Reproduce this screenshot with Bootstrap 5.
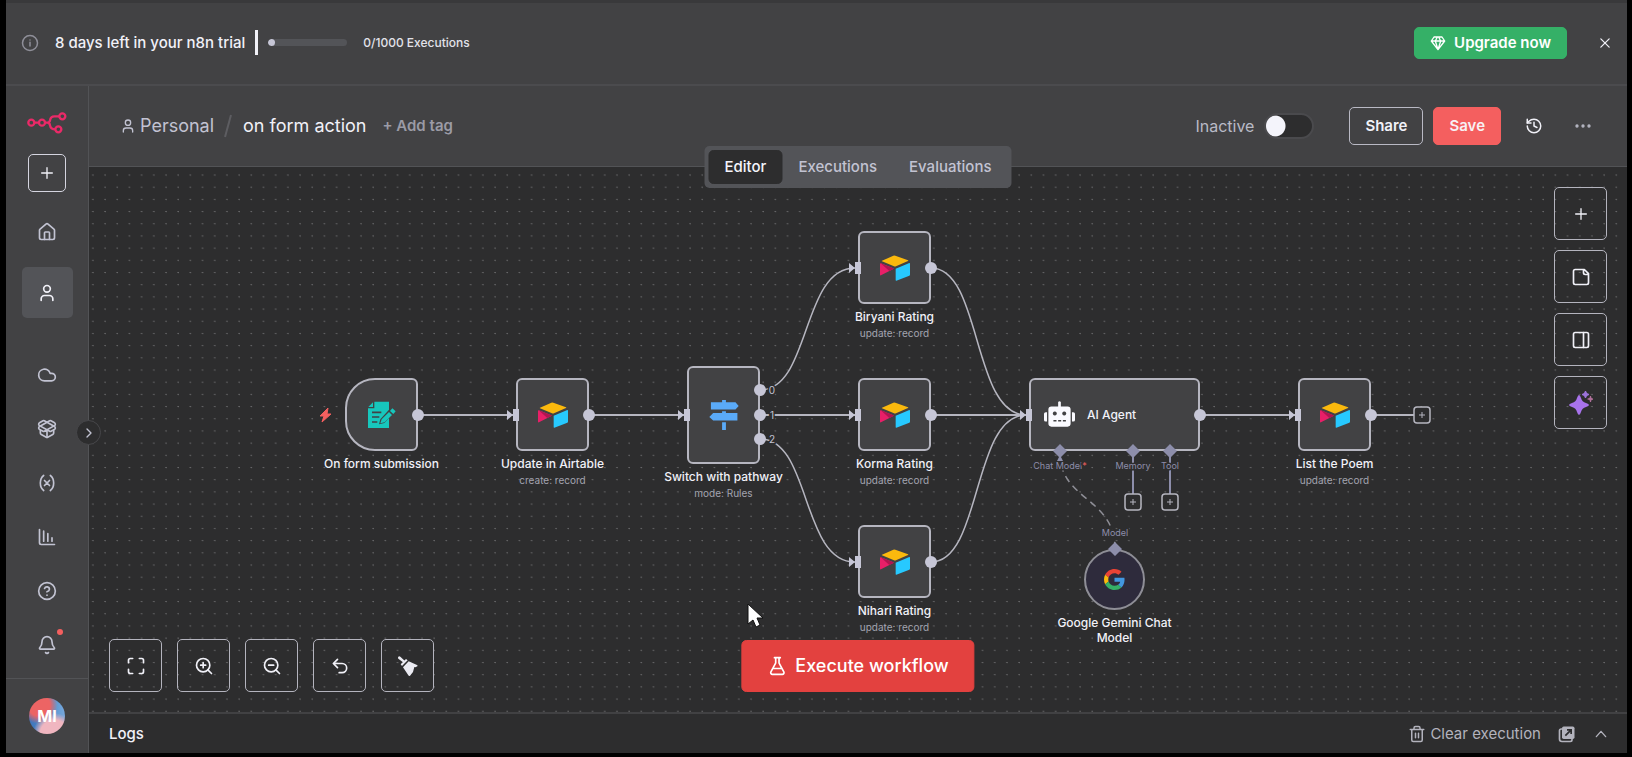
<!DOCTYPE html>
<html lang="en" data-bs-theme="dark">
<head>
<meta charset="utf-8">
<meta name="viewport" content="width=device-width, initial-scale=1">
<title>on form action - n8n</title>
<link href="https://cdn.jsdelivr.net/npm/bootstrap@5.3.0/dist/css/bootstrap.min.css" rel="stylesheet">
<style>
  :root {
    --panel: #424244; --canvas: #2d2d2e; --rule: #525356; --raised: #535458;
    --line: #b6b6c0; --port: #c6c6d6; --sub: #8d8eab; --soft: #c2c3d2; --bright: #f1f1f8;
  }
  body { background: #000; color: var(--bright); font-family: Inter, "Liberation Sans", sans-serif; font-size: 15px; line-height: 20px; }
  .shell { min-height: 100vh; padding: 0 5px 4px 6px; }
  .ico { width: 20px; height: 20px; fill: none; stroke: currentColor; stroke-width: 2; stroke-linecap: round; stroke-linejoin: round; flex: none; }
  .ico-16 { width: 16px; height: 16px; }
  .ico-18 { width: 18px; height: 18px; }
  .plain { background: none; border: 0; padding: 0; color: inherit; display: inline-flex; }
  a { color: inherit; text-decoration: none; }

  .trial { background: var(--panel); border-top: 3px solid #39393b; border-bottom: 2px solid #4b4b4e; height: 86px; padding: 0 12px 2px 15px; }
  .trial-note { font-weight: 500; }
  .trial-bar { width: 3px; height: 25px; background: var(--bright); margin: 0 10px; }
  .progress { --bs-progress-height: 7px; --bs-progress-bg: #535458; --bs-progress-bar-bg: #c6c6d6; width: 79px; border-radius: 4px; }
  .progress-bar { border-radius: 4px; }
  .usage { font-size: 12px; font-weight: 500; color: #e2e2ea; }
  .btn { --bs-btn-font-size: 15px; --bs-btn-font-weight: 600; line-height: 20px; border-radius: 5px; }
  .btn-upgrade { --bs-btn-color: #fff; --bs-btn-bg: #35b067; --bs-btn-border-color: #35b067; --bs-btn-padding-y: 5px; --bs-btn-padding-x: 15px; }

  .rail { width: 83px; background: var(--panel); border-right: 1px solid var(--rule); color: var(--soft); }
  .rail-top { padding-top: 22px; }
  .rail-link { width: 51px; height: 51px; border-radius: 5px; }
  .rail-link.active { background: var(--raised); color: var(--bright); }
  .rail-list { gap: 3px; }
  .btn-new { width: 38px; height: 38px; border: 1px solid #d5d5e0; border-radius: 5px; color: var(--bright); margin-bottom: 14px; }
  .rail-home { margin-bottom: 10px; }
  .rail-foot { border-top: 1px solid var(--rule); height: 75px; }
  .avatar { width: 36px; height: 36px; border-radius: 50%; color: #fff; font-size: 16px; font-weight: 700;
    background: radial-gradient(circle at 70% 100%, #f0b6c0 0 32%, transparent 48%), radial-gradient(circle at 28% 20%, #ec6464 0 28%, transparent 48%), linear-gradient(90deg, #3f73ba, #4c93d0 60%, #7aa8dc); }
  .dot { width: 6px; height: 6px; border-radius: 50%; background: #f45f5f; top: 10px; right: 10px; }
  .rail-toggle { width: 25px; height: 25px; border: 1px solid #47474a; border-radius: 50%; background: var(--canvas); color: var(--soft); top: 334px; right: -13px; z-index: 3; }

  .topbar { background: var(--panel); border-bottom: 1px solid var(--rule); height: 81px; padding: 0 36px 0 31px; }
  .crumb { font-size: 18px; color: var(--soft); }
  .crumb-now { font-size: 18px; }
  .add-tag { font-weight: 600; color: #9b9ba6; }
  .state { color: #b9bac6; }
  .state-label { font-size: 16px; }
  .run-state { gap: 10px; margin-right: 35px; }
  .form-switch .form-check-input { width: 50px; height: 26px; margin: 0; border: 2px solid #4a4a4d; background-color: var(--canvas); background-image: radial-gradient(circle at 9px 50%, #f4f4fb 10px, transparent 11px); background-size: auto; background-position: left center; }
  .btn-share { --bs-btn-color: #f1f1f8; --bs-btn-border-color: #b9b9c4; --bs-btn-padding-y: 8px; --bs-btn-padding-x: 15px; margin-right: 10px; }
  .btn-save { --bs-btn-color: #f8f0f4; --bs-btn-bg: #f45f5f; --bs-btn-border-color: #f45f5f; --bs-btn-padding-y: 8px; --bs-btn-padding-x: 15px; }
  .views { top: 60px; padding: 4px; background: var(--raised); border-radius: 5px; z-index: 4; }
  .views .btn { --bs-btn-font-weight: 500; --bs-btn-padding-x: 15px; --bs-btn-padding-y: 6px; --bs-btn-color: #c2c3d2; --bs-btn-border-color: transparent; }
  .views .btn.active { --bs-btn-active-bg: #2d2d2e; --bs-btn-active-color: #f4f4fb; --bs-btn-active-border-color: #2d2d2e; }

  .canvas { min-height: 545px; background-color: var(--canvas); background-image: radial-gradient(circle at 4px 8px, #69696b 0, #69696b 0.6px, transparent 1px); background-size: 12.2px 12.2px; }
  .board { position: absolute; top: 0; left: 50%; width: 1538px; height: 545px; margin-left: -769px; }
  .layer { position: absolute; inset: 0; width: 100%; height: 100%; }
  .board text { font-size: 9px; fill: var(--sub); text-anchor: middle; stroke: var(--canvas); stroke-width: 3px; paint-order: stroke; }
  .board .outno { font-size: 10px; fill: var(--soft); }
  .step { position: absolute; width: 73px; }
  .step-box { height: 73px; background: var(--panel); border: 2px solid var(--line); border-radius: 6px; }
  .step-box svg { width: 30px; height: 30px; }
  .step-trigger { border-radius: 30px 6px 6px 30px; }
  .step-tall { height: 98px; }
  .step-wide { width: 171px; }
  .step-wide .step-box { padding-left: 13px; }
  .step-wide .step-box svg { width: 31px; height: 31px; }
  .step-round { width: 61px; }
  .step-round .step-box { height: 61px; border-radius: 50%; background: #2e2b3c; border-color: #8e8e96; }
  .step-round .step-box svg { width: 21px; height: 21px; }
  .step-text { width: 140px; left: 50%; margin-left: -70px; top: 100%; padding-top: 5px; text-align: center; }
  .step-title { font-size: 12px; line-height: 15px; font-weight: 500; }
  .step-sub { font-size: 10px; line-height: 19px; color: #a3a4b0; }
  .btn-tool { width: 53px; height: 53px; border: 1px solid #b4b4be; border-radius: 5px; color: var(--bright); background: none; display: flex; align-items: center; justify-content: center; }
  .tools-side { top: 20px; right: 20px; gap: 10px; }
  .tools-base { left: 20px; bottom: 20px; gap: 15px; }
  .btn-run { --bs-btn-color: #fff; --bs-btn-bg: #e3413f; --bs-btn-border-color: #e3413f; --bs-btn-font-size: 18px; --bs-btn-font-weight: 500; --bs-btn-padding-x: 25px; --bs-btn-padding-y: 15px; bottom: 20px; }
  .pointer { position: absolute; left: 657px; top: 436px; width: 18px; height: 26px; }
  .logs { background: var(--canvas); border-top: 2px solid #414143; height: 41px; padding: 0 18px 0 20px; }
  .logs-end { color: #b3b3bd; }
</style>
</head>
<body>
<svg class="d-none" aria-hidden="true">
  <symbol id="plus" viewBox="0 0 24 24"><path d="M4 12h16M12 4v16"/></symbol>
  <symbol id="user" viewBox="0 0 24 24"><circle cx="12" cy="7" r="4"/><path d="M19 21v-2a4 4 0 0 0-4-4H9a4 4 0 0 0-4 4v2"/></symbol>
  <symbol id="airtable" viewBox="0 0 90 90">
    <path fill="#fbb90d" d="M6 23 40 8q3-1 6 0l38 14q2 1 0 2L48 40q-3 1-6 0L6 25q-2-1 0-2z"/>
    <path fill="#27c9ff" d="M47 47 88 30q2 0 2 2v33q0 2-2 3L49 83q-2 1-2-2z"/>
    <path fill="#e81f68" d="M0 32q0-2 3-1l37 15q2 1 0 2L3 67q-3 1-3-2z"/>
    <path fill="#b01550" d="M2 31 40 46q2 1 0 2L28 54z"/>
  </symbol>
</svg>

<div class="shell d-flex flex-column">
  <header class="trial d-flex align-items-center">
    <svg class="ico ico-18" style="color:#8f8f99" viewBox="0 0 24 24"><circle cx="12" cy="12" r="10"/><path d="M12 16v-5M12 8h.01"/></svg>
    <span class="trial-note ms-3">8 days left in your n8n trial</span>
    <span class="trial-bar"></span>
    <div class="progress" role="progressbar" aria-label="Executions used" aria-valuenow="0" aria-valuemin="0" aria-valuemax="1000"><div class="progress-bar" style="width:8%"></div></div>
    <span class="usage ms-3">0/1000 Executions</span>
    <button type="button" class="btn btn-upgrade d-flex align-items-center gap-2 ms-auto">
      <svg class="ico ico-16" viewBox="0 0 24 24"><path d="M6 3h12l4 6-10 13L2 9ZM11 3 8 9l4 13 4-13-3-6M2 9h20"/></svg>Upgrade now</button>
    <button type="button" class="plain ms-4 ps-1" aria-label="Dismiss"><svg class="ico" viewBox="0 0 24 24"><path d="M7 7l10 10M17 7 7 17" stroke-width="1.5"/></svg></button>
  </header>

  <div class="d-flex flex-grow-1">
    <nav class="rail position-relative d-flex flex-column flex-shrink-0" aria-label="Main">
      <div class="rail-top d-flex flex-column align-items-center flex-grow-1">
        <a href="#" aria-label="n8n" class="d-flex pt-1 mb-3 pb-1"><svg width="40" height="22" viewBox="0 0 120 66" fill="none" stroke="#ea2a68" stroke-width="7"><circle cx="13" cy="32" r="9"/><circle cx="45" cy="32" r="9"/><circle cx="106" cy="13" r="9"/><circle cx="94" cy="52" r="9"/><path d="M22 32h14M54 32h7q7 0 8-7 2-12 13-12h15M61 32q7 0 8 8 2 12 16 12"/></svg></a>
        <button type="button" class="btn-new bg-transparent d-flex align-items-center justify-content-center p-0" aria-label="New"><svg class="ico ico-16" viewBox="0 0 24 24"><use href="#plus"/></svg></button>
        <a href="#" class="rail-link rail-home d-flex align-items-center justify-content-center" aria-label="Overview"><svg class="ico" viewBox="0 0 24 24"><path d="M15 21v-8a1 1 0 0 0-1-1h-4a1 1 0 0 0-1 1v8"/><path d="M3 10a2 2 0 0 1 .709-1.528l7-5.999a2 2 0 0 1 2.582 0l7 5.999A2 2 0 0 1 21 10v9a2 2 0 0 1-2 2H5a2 2 0 0 1-2-2z"/></svg></a>
        <a href="#" class="rail-link active d-flex align-items-center justify-content-center" aria-label="Personal"><svg class="ico" viewBox="0 0 24 24"><use href="#user"/></svg></a>
        <div class="rail-list d-flex flex-column mt-auto pb-2">
          <a href="#" class="rail-link d-flex align-items-center justify-content-center" aria-label="Admin panel"><svg class="ico" viewBox="0 0 24 24"><path d="M17.5 19H9a7 7 0 1 1 6.71-9h1.79a4.5 4.5 0 1 1 0 9Z"/></svg></a>
          <a href="#" class="rail-link d-flex align-items-center justify-content-center" aria-label="Templates"><svg class="ico" viewBox="0 0 24 24"><path d="M12 22v-9M15.17 2.21a1.67 1.67 0 0 1 1.63 0L21 4.57a1.93 1.93 0 0 1 0 3.36L8.82 14.79a1.655 1.655 0 0 1-1.64 0L3 12.43a1.93 1.93 0 0 1 0-3.36z"/><path d="M20 13v3.87a2.06 2.06 0 0 1-1.11 1.83l-6 3.08a1.93 1.93 0 0 1-1.78 0l-6-3.08A2.06 2.06 0 0 1 4 16.87V13"/><path d="M21 12.43a1.93 1.93 0 0 0 0-3.36L8.83 2.2a1.64 1.64 0 0 0-1.63 0L3 4.57a1.93 1.93 0 0 0 0 3.36l12.18 6.86a1.636 1.636 0 0 0 1.63 0z"/></svg></a>
          <a href="#" class="rail-link d-flex align-items-center justify-content-center" aria-label="Variables"><svg class="ico" viewBox="0 0 24 24"><path d="M8 21s-4-3-4-9 4-9 4-9M16 3s4 3 4 9-4 9-4 9M15 9l-6 6M9 9l6 6"/></svg></a>
          <a href="#" class="rail-link d-flex align-items-center justify-content-center" aria-label="Insights"><svg class="ico" viewBox="0 0 24 24"><path d="M3 3v16a2 2 0 0 0 2 2h16M8 17V5M13 17V8M18 17v-4"/></svg></a>
          <a href="#" class="rail-link d-flex align-items-center justify-content-center" aria-label="Help"><svg class="ico" viewBox="0 0 24 24"><circle cx="12" cy="12" r="10"/><path d="M9.09 9a3 3 0 0 1 5.83 1c0 2-3 3-3 3M12 17h.01"/></svg></a>
          <a href="#" class="rail-link position-relative d-flex align-items-center justify-content-center" aria-label="What's new"><svg class="ico" viewBox="0 0 24 24"><path d="M10.268 21a2 2 0 0 0 3.464 0M3.262 15.326A1 1 0 0 0 4 17h16a1 1 0 0 0 .74-1.673C19.41 13.956 18 12.499 18 8A6 6 0 0 0 6 8c0 4.499-1.411 5.956-2.738 7.326"/></svg><span class="dot position-absolute"></span></a>
        </div>
      </div>
      <div class="rail-foot d-flex align-items-center justify-content-center"><button type="button" class="avatar border-0 p-0">MI</button></div>
      <button type="button" class="rail-toggle position-absolute d-flex align-items-center justify-content-center p-0" aria-label="Expand"><svg class="ico ico-16" viewBox="0 0 24 24"><path d="m9 18 6-6-6-6"/></svg></button>
    </nav>

    <div class="d-flex flex-column flex-grow-1">
      <div class="topbar position-relative d-flex align-items-center">
        <a href="#" class="crumb d-flex align-items-center gap-1"><svg class="ico ico-16" viewBox="0 0 24 24"><use href="#user"/></svg>Personal</a>
        <svg class="mx-2" width="13" height="24" viewBox="0 0 13 24" stroke="#5d5d61" stroke-width="2"><path d="M3 23 9 1"/></svg>
        <span class="crumb-now">on form action</span>
        <button type="button" class="plain add-tag ms-3">+ Add tag</button>
        <div class="d-flex align-items-center ms-auto">
          <div class="run-state form-check form-switch d-flex align-items-center p-0 mb-0">
            <label class="state state-label" for="activeSwitch">Inactive</label>
            <input class="form-check-input" type="checkbox" role="switch" id="activeSwitch">
          </div>
          <button type="button" class="btn btn-share">Share</button>
          <button type="button" class="btn btn-save">Save</button>
          <button type="button" class="plain ms-4" aria-label="History"><svg class="ico ico-18" viewBox="0 0 24 24"><path d="M3 12a9 9 0 1 0 9-9 9.75 9.75 0 0 0-6.74 2.74L3 8"/><path d="M3 3v5h5M12 7v5l4 2"/></svg></button>
          <button type="button" class="plain state ms-4 ps-2" aria-label="More"><svg class="ico ico-16" viewBox="0 0 24 24"><circle cx="3" cy="12" r="1.5"/><circle cx="12" cy="12" r="1.5"/><circle cx="21" cy="12" r="1.5"/></svg></button>
        </div>
        <div class="views position-absolute start-50 translate-middle-x d-flex" role="group" aria-label="Views">
          <button type="button" class="btn active">Editor</button>
          <button type="button" class="btn">Executions</button>
          <button type="button" class="btn">Evaluations</button>
        </div>
      </div>

      <main class="canvas position-relative flex-grow-1 overflow-hidden">
        <div class="board">
          <svg class="layer" viewBox="0 0 1538 545" fill="none" stroke="#b6b6c0" stroke-width="2">
            <path d="M329 248H424M500 248H595M671 248H766M842 248H937M1111 248H1206M1282 248H1325"/>
            <path d="M671 223C722 223 712 101 766 101M671 272C722 272 712 395 766 395" stroke-width="1.5"/>
            <path d="M842 101C893 101 883 248 937 248M842 395C893 395 883 248 937 248" stroke-width="1.5"/>
            <path d="M971 286C971 334 1026 330 1026 382" stroke="#8e8e96" stroke-width="1.5" stroke-dasharray="7 5"/>
            <path d="M1044 286V327M1081 286V327" stroke="#8d8eab"/>
          </svg>

          <div class="step" style="left:256px;top:211px"><div class="step-box step-trigger d-flex align-items-center justify-content-center">
            <svg viewBox="0 0 90 90"><path fill="#17c7bd" d="M22 5h44v24L40 58l-4 15 16-4 14-15v30H3V25h19z"/><path fill="#17c7bd" d="M18 7v14H4zM76 25l10 9-7 8-10-9zM66 36l9 9-22 22-13 3 4-12z"/><path stroke="#424244" stroke-width="5" d="M15 37h28M15 51h22M15 66h16" fill="none"/></svg></div>
            <div class="step-text position-absolute"><div class="step-title">On form submission</div></div></div>
          <div class="step" style="left:427px;top:211px"><div class="step-box d-flex align-items-center justify-content-center"><svg><use href="#airtable"/></svg></div>
            <div class="step-text position-absolute"><div class="step-title">Update in Airtable</div><div class="step-sub">create: record</div></div></div>
          <div class="step" style="left:598px;top:199px"><div class="step-box step-tall d-flex align-items-center justify-content-center">
            <svg viewBox="0 0 92 94"><path fill="#5aaaf8" d="M40 0h12v7h30l10 12-10 11H5V7h35zM40 35h12v6h36v23H12L0 53l12-12h28zM40 70h12v24H40z"/></svg></div>
            <div class="step-text position-absolute"><div class="step-title">Switch with pathway</div><div class="step-sub">mode: Rules</div></div></div>
          <div class="step" style="left:769px;top:64px"><div class="step-box d-flex align-items-center justify-content-center"><svg><use href="#airtable"/></svg></div>
            <div class="step-text position-absolute"><div class="step-title">Biryani Rating</div><div class="step-sub">update: record</div></div></div>
          <div class="step" style="left:769px;top:211px"><div class="step-box d-flex align-items-center justify-content-center"><svg><use href="#airtable"/></svg></div>
            <div class="step-text position-absolute"><div class="step-title">Korma Rating</div><div class="step-sub">update: record</div></div></div>
          <div class="step" style="left:769px;top:358px"><div class="step-box d-flex align-items-center justify-content-center"><svg><use href="#airtable"/></svg></div>
            <div class="step-text position-absolute"><div class="step-title">Nihari Rating</div><div class="step-sub">update: record</div></div></div>
          <div class="step step-wide" style="left:940px;top:211px"><div class="step-box d-flex align-items-center"><div class="step-title d-flex align-items-center">
            <svg class="me-2" viewBox="0 0 92 92"><path fill="#fafaff" fill-rule="evenodd" d="M42 9q4-4 8 0v13h20q9 0 9 9v42q0 9-9 9H22q-9 0-9-9V31q0-9 9-9h20zM32 37a6 6 0 1 0 .1 0zM60 37a6 6 0 1 0 .1 0zM28 62v5h9v-5zM42 62v5h9v-5zM56 62v5h9v-5zM9 39v28H5q-5 0-5-5V44q0-5 5-5zM83 39v28h4q5 0 5-5V44q0-5-5-5z"/></svg><span class="ps-1">AI Agent</span></div></div></div>
          <div class="step" style="left:1209px;top:211px"><div class="step-box d-flex align-items-center justify-content-center"><svg><use href="#airtable"/></svg></div>
            <div class="step-text position-absolute"><div class="step-title">List the Poem</div><div class="step-sub">update: record</div></div></div>
          <div class="step step-round" style="left:995px;top:382px"><div class="step-box d-flex align-items-center justify-content-center">
            <svg viewBox="0 0 48 48"><path fill="#ea4335" d="M24 9.5c3.54 0 6.71 1.22 9.21 3.6l6.85-6.85C35.9 2.38 30.47 0 24 0 14.62 0 6.51 5.38 2.56 13.22l7.98 6.19C12.43 13.72 17.74 9.5 24 9.5z"/><path fill="#4297e0" d="M46.98 24.55c0-1.57-.15-3.09-.38-4.55H24v9.02h12.94c-.58 2.96-2.26 5.48-4.78 7.18l7.73 6c4.51-4.18 7.09-10.36 7.09-17.65z"/><path fill="#fbb90d" d="M10.53 28.59c-.48-1.45-.76-2.99-.76-4.59s.27-3.14.76-4.59l-7.98-6.19C.92 16.46 0 20.12 0 24c0 3.88.92 7.54 2.56 10.78l7.97-6.19z"/><path fill="#35b067" d="M24 48c6.48 0 11.93-2.13 15.89-5.81l-7.73-6c-2.15 1.45-4.92 2.3-8.16 2.3-6.26 0-11.57-4.22-13.47-9.91l-7.98 6.19C6.51 42.62 14.62 48 24 48z"/></svg></div>
            <div class="step-text position-absolute"><div class="step-title">Google Gemini Chat<br>Model</div></div></div>

          <!-- ports, add buttons and connector labels sit above the nodes -->
          <svg class="layer" viewBox="0 0 1538 545">
            <text class="outno" x="683" y="227">0</text><text class="outno" x="683" y="252">1</text><text class="outno" x="683" y="276">2</text>
            <text x="971" y="302">Chat Model<tspan fill="#f45f5f">*</tspan></text>
            <text x="1044" y="302">Memory</text><text x="1081" y="302">Tool</text><text x="1026" y="369">Model</text>
            <g fill="#c6c6d6">
              <circle cx="329" cy="248" r="6"/><circle cx="500" cy="248" r="6"/><circle cx="671" cy="223" r="6"/><circle cx="671" cy="248" r="6"/><circle cx="671" cy="272" r="6"/>
              <circle cx="842" cy="101" r="6"/><circle cx="842" cy="248" r="6"/><circle cx="842" cy="395" r="6"/><circle cx="1111" cy="248" r="6"/><circle cx="1282" cy="248" r="6"/>
              <path d="M424 242h6v12h-6zM418 243l6 5-6 5zM595 242h6v12h-6zM589 243l6 5-6 5zM766 95h6v12h-6zM760 96l6 5-6 5zM766 242h6v12h-6zM760 243l6 5-6 5zM766 389h6v12h-6zM760 390l6 5-6 5zM937 242h6v12h-6zM931 243l6 5-6 5zM1206 242h6v12h-6zM1200 243l6 5-6 5z"/>
            </g>
            <path fill="#8d8eab" d="M971 277l7 7-7 7-7-7zM1044 277l7 7-7 7-7-7zM1081 277l7 7-7 7-7-7zM1026 375l7 7-7 7-7-7zM971 288l3 6h-6z"/>
            <g fill="#2d2d2e" stroke="#b6b6c0" stroke-width="1.5">
              <rect x="1325" y="240" width="16" height="16" rx="3"/><rect x="1036" y="327" width="16" height="16" rx="3"/><rect x="1073" y="327" width="16" height="16" rx="3"/>
              <path d="M1330 248h6M1333 245v6M1041 335h6M1044 332v6M1078 335h6M1081 332v6" stroke-width="1"/>
            </g>
            <path fill="#f45f5f" stroke="#f45f5f" d="M239 241l-8 8h4l-2 6 9-8h-4z"/>
          </svg>
          <svg class="pointer" viewBox="0 0 18 26"><path fill="#fff" stroke="#111" d="M2 1v20l5-4 3 7 4-2-3-7h6z"/></svg>
        </div>

        <div class="tools-side position-absolute d-flex flex-column">
          <button type="button" class="btn-tool" aria-label="Add node"><svg class="ico ico-16" viewBox="0 0 24 24"><use href="#plus"/></svg></button>
          <button type="button" class="btn-tool" aria-label="Add note"><svg class="ico" viewBox="0 0 24 24"><path d="M16 3H5a2 2 0 0 0-2 2v14a2 2 0 0 0 2 2h14a2 2 0 0 0 2-2V8ZM15 3v4a2 2 0 0 0 2 2h4"/></svg></button>
          <button type="button" class="btn-tool" aria-label="Focus panel"><svg class="ico" viewBox="0 0 24 24"><rect x="3" y="3" width="18" height="18" rx="2"/><path d="M15 3v18"/></svg></button>
          <button type="button" class="btn-tool" aria-label="Assistant"><svg width="24" height="24" viewBox="0 0 24 24"><path fill="#a873ec" d="M10 4q1 0 2 3 1 4 5 5 3 1 3 2t-3 2q-4 1-5 5-1 3-2 3t-2-3q-1-4-5-5-3-1-3-2t3-2q4-1 5-5 1-3 2-3z"/><path fill="#9a72d8" d="M16 0h1l1 2 2 1v1l-2 1-1 2h-1l-1-2-2-1V3l2-1z"/><path fill="#b0709a" d="M21 5h1l.5 2 2 .5v1L22.5 9 22 11h-1l-.5-2-2-.5v-1l2-.5z"/></svg></button>
        </div>

        <div class="tools-base position-absolute d-flex">
          <button type="button" class="btn-tool" aria-label="Zoom to fit"><svg class="ico" viewBox="0 0 24 24"><path d="M8 3H5a2 2 0 0 0-2 2v3M21 8V5a2 2 0 0 0-2-2h-3M3 16v3a2 2 0 0 0 2 2h3M16 21h3a2 2 0 0 0 2-2v-3"/></svg></button>
          <button type="button" class="btn-tool" aria-label="Zoom in"><svg class="ico" viewBox="0 0 24 24"><circle cx="11" cy="11" r="8"/><path d="m21 21-4.35-4.35M11 8v6M8 11h6"/></svg></button>
          <button type="button" class="btn-tool" aria-label="Zoom out"><svg class="ico" viewBox="0 0 24 24"><circle cx="11" cy="11" r="8"/><path d="m21 21-4.35-4.35M8 11h6"/></svg></button>
          <button type="button" class="btn-tool" aria-label="Undo"><svg class="ico" viewBox="0 0 24 24"><path d="M9 14 4 9l5-5M4 9h10.5a5.5 5.5 0 0 1 0 11H11"/></svg></button>
          <button type="button" class="btn-tool" aria-label="Tidy up"><svg width="20" height="20" viewBox="0 0 60 60" fill="#ebebf2"><path d="M1 2q3-3 6 0l13 12-5 5L1 8q-2-3 0-6zM24 9l5 4-17 17-4-5zM32 16l25 11q3 2 1 4l-6 3-3-1-4 15-9 11q-3 2-5-1L15 34z"/></svg></button>
        </div>

        <button type="button" class="btn btn-run position-absolute start-50 translate-middle-x d-flex align-items-center gap-2"><svg class="ico" viewBox="0 0 24 24"><path d="M14 2v6a2 2 0 0 0 .245.96l5.51 10.08A2 2 0 0 1 18 22H6a2 2 0 0 1-1.755-2.96l5.51-10.08A2 2 0 0 0 10 8V2M6.453 15h11.094M8.5 2h7"/></svg>Execute workflow</button>
      </main>

      <footer class="logs d-flex align-items-center">
        <span class="fw-medium">Logs</span>
        <div class="logs-end d-flex align-items-center ms-auto">
          <button type="button" class="plain align-items-center gap-1"><svg class="ico ico-18" viewBox="0 0 24 24"><path d="M3 6h18M19 6v14a2 2 0 0 1-2 2H7a2 2 0 0 1-2-2V6M8 6V4a2 2 0 0 1 2-2h4a2 2 0 0 1 2 2v2M10 11v6M14 11v6"/></svg>Clear execution</button>
          <button type="button" class="plain ms-3" aria-label="Pop out"><svg width="20" height="20" viewBox="0 0 24 24"><path d="M6 6H5a2 2 0 0 0-2 2v10a3 3 0 0 0 3 3h10a2 2 0 0 0 2-2v-1" fill="none" stroke="currentColor" stroke-width="2"/><rect x="6" y="3" width="15" height="15" rx="2" fill="currentColor"/><path d="M10 14l7-7M12 7h5v5" fill="none" stroke="#2d2d2e" stroke-width="2"/></svg></button>
          <button type="button" class="plain ms-3" aria-label="Open logs"><svg class="ico ico-16" viewBox="0 0 24 24"><path d="m5 16 7-8 7 8"/></svg></button>
        </div>
      </footer>
    </div>
  </div>
</div>
<script src="https://cdn.jsdelivr.net/npm/bootstrap@5.3.0/dist/js/bootstrap.bundle.min.js"></script>
</body>
</html>
